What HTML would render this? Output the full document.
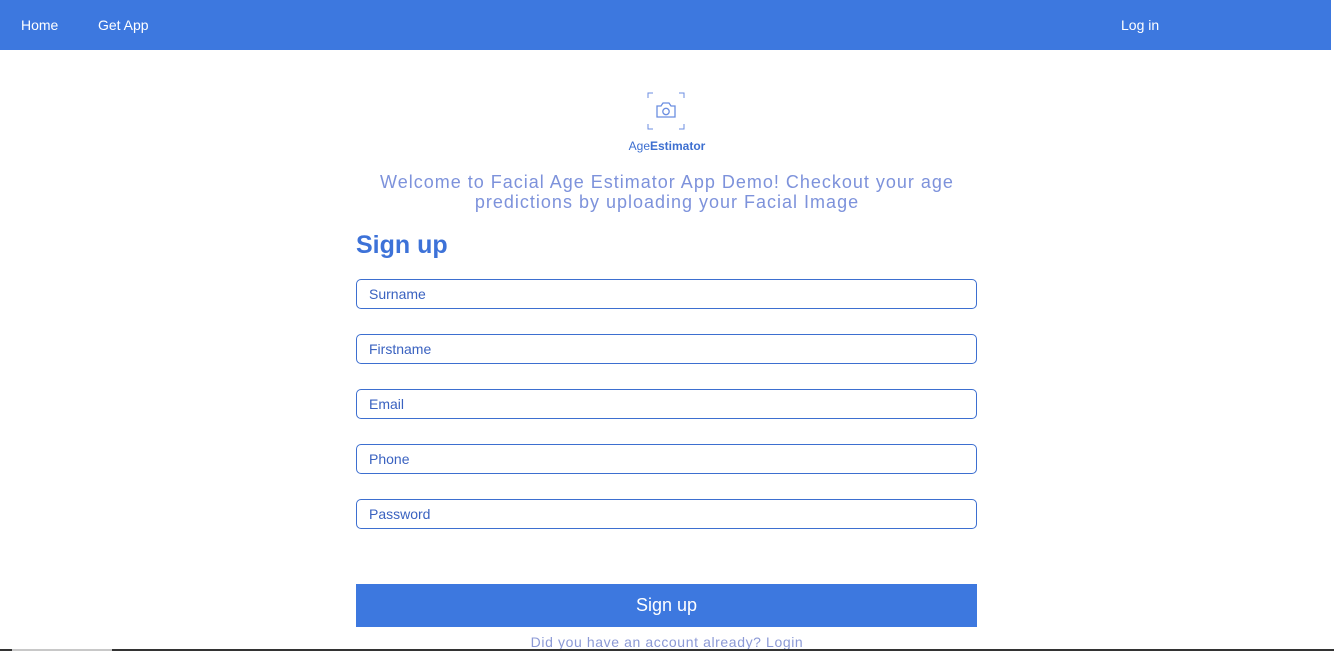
<!DOCTYPE html>
<html><head><meta charset="utf-8"><style>
*{box-sizing:border-box;margin:0;padding:0}
body{width:1334px;height:651px;overflow:hidden;background:#fff;font-family:"Liberation Sans",sans-serif;position:relative}
.nav{position:absolute;left:0;top:0;width:1331px;height:50px;background:#3d78df;color:#fff;font-size:14px}
.nav span{position:absolute;top:17px}
.logo{position:absolute;left:647px;top:92px;width:38px;height:38px}
.brand{position:absolute;left:0;width:1334px;top:139px;text-align:center;font-size:12px;color:#3d6fd0}
.welcome{position:absolute;left:340px;width:654px;top:172px;text-align:center;font-size:18px;line-height:20px;color:#7d92db;letter-spacing:1px}
h1{position:absolute;left:356px;top:231px;font-size:25px;color:#3d72d8;font-weight:bold}
.in{position:absolute;left:356px;width:621px;height:30px;border:1px solid #3d6fd0;border-radius:5px;font-size:14px;color:#3a62c0;padding:6px 0 0 12px}
.btn{position:absolute;left:356px;top:584px;width:621px;height:43px;background:#3d78df;color:#fff;font-size:18px;text-align:center;line-height:42px}
.link{position:absolute;left:0;width:1334px;top:634px;text-align:center;font-size:14px;color:#8c9ad6;letter-spacing:0.6px}
.bar{position:absolute;left:0;top:649px;width:1334px;height:2px;background:#333}
.bar i{position:absolute;left:12px;width:100px;height:2px;background:#c8c8c8}
</style></head><body>
<div class="nav"><span style="left:21px">Home</span><span style="left:98px">Get App</span><span style="left:1121px">Log in</span></div>
<svg class="logo" viewBox="0 0 38 38" fill="none" stroke="#6b8ee0" stroke-width="1">
<path d="M1 6V1h5M32 1h5v5M37 32v5h-5M6 37H1v-5"/>
<path d="M10 14h4l2-3h6l2 3h4v11H10z" stroke-width="1.3"/>
<circle cx="19" cy="19.5" r="3.2" stroke-width="1.3"/>
</svg>
<div class="brand">Age<b>Estimator</b></div>
<div class="welcome">Welcome to Facial Age Estimator App Demo! Checkout your age predictions by uploading your Facial Image</div>
<h1>Sign up</h1>
<div class="in" style="top:279px">Surname</div>
<div class="in" style="top:334px">Firstname</div>
<div class="in" style="top:389px">Email</div>
<div class="in" style="top:444px">Phone</div>
<div class="in" style="top:499px">Password</div>
<div class="btn">Sign up</div>
<div class="link">Did you have an account already? Login</div>
<div class="bar"><i></i></div>
</body></html>
